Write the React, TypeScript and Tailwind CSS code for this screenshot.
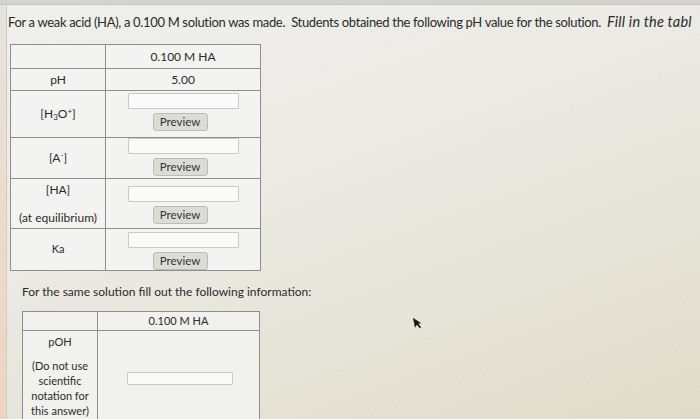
import React from 'react';

const font = { fontFamily: 'Lato, "Open Sans", sans-serif' };

function AnswerBox({ w = 'w-[111px]', h = 'h-[16px]' }: { w?: string; h?: string }) {
  return <div className={`${w} ${h} bg-[#fafaf8] border border-[#c9c9c5] rounded-[1px]`} />;
}

function PreviewButton() {
  return (
    <div className="mr-[6px] w-[55px] h-[18px] bg-[#dcdcd7] border border-[#bdbdb8] rounded-[3px] flex items-center justify-center text-[11.5px] text-[#333]">
      Preview
    </div>
  );
}

function InputCell({ top }: { top: string }) {
  return (
    <div className={`flex flex-col items-center gap-[4px] ${top}`}>
      <AnswerBox />
      <PreviewButton />
    </div>
  );
}

const cell = 'p-0 border border-[#8e8e8c]';

export default function App() {
  return (
    <div
      className="relative w-[700px] h-[419px] overflow-hidden text-[#2b2b2b] bg-[linear-gradient(160deg,#efefec_0%,#ecebe6_35%,#e6e4d8_70%,#dfdbc9_100%)]"
      style={font}
    >
      <div className="h-[5px] bg-[#d3d3d0] border-b border-[#c4c4c0]" />

      <div className="flex">
        {/* left edge of the monitor bezel */}
        <div className="w-[7px] shrink-0 h-[414px] border-r border-[#cfcac2] bg-[linear-gradient(180deg,#e6e4e0_0%,#ecdccd_45%,#f0d4c0_100%)]" />

        <div className="flex-1 min-w-0">
          <p className="mt-[9px] ml-[1px] text-[13px] leading-[16px] whitespace-nowrap tracking-[-0.33px]">
            For a weak acid (HA), a 0.100 M solution was made.&nbsp; Students obtained the following pH value for the solution.&nbsp;{' '}
            <i className="text-[14.5px] tracking-[0.2px]">Fill in the tabl</i>
          </p>

          <table className="mt-[14px] ml-[3px] border-collapse text-[12px] bg-[#f3f3f1]">
            <tbody>
              <tr className="h-[24px]">
                <td className={`w-[95px] ${cell}`} />
                <td className={`w-[155px] ${cell} text-center`}>0.100 M HA</td>
              </tr>
              <tr className="h-[22px]">
                <td className={`${cell} text-center`}>pH</td>
                <td className={`${cell} text-center`}>5.00</td>
              </tr>
              <tr className="h-[47px]">
                <td className={`${cell} text-center`}>
                  [H<sub className="text-[8px]">3</sub>O<sup className="text-[8px]">+</sup>]
                </td>
                <td className={`${cell} align-top`}>
                  <InputCell top="pt-[2px]" />
                </td>
              </tr>
              <tr className="h-[41px]">
                <td className={`${cell} text-center`}>
                  [A<sup className="text-[8px]">-</sup>]
                </td>
                <td className={`${cell} align-top`}>
                  <InputCell top="pt-[0px]" />
                </td>
              </tr>
              <tr className="h-[50px]">
                <td className={`${cell} text-center leading-[14px]`}>
                  [HA]
                  <br />
                  <br />
                  (at equilibrium)
                </td>
                <td className={`${cell} align-top`}>
                  <InputCell top="pt-[7px]" />
                </td>
              </tr>
              <tr className="h-[42px]">
                <td className={`${cell} text-center text-[11px]`}>Ka</td>
                <td className={`${cell} align-top`}>
                  <InputCell top="pt-[3px]" />
                </td>
              </tr>
            </tbody>
          </table>

          <p className="mt-[14px] ml-[15px] text-[12px] leading-[14px] whitespace-nowrap">
            For the same solution fill out the following information:
          </p>

          <table className="mt-[12px] ml-[15px] border-collapse text-[11px] bg-[#f1f1ee]">
            <tbody>
              <tr className="h-[19px]">
                <td className={`w-[75px] ${cell}`} />
                <td className={`w-[162px] ${cell} text-center`}>0.100 M HA</td>
              </tr>
              <tr className="h-[95px]">
                <td className={`${cell} text-center align-top leading-[15px] pt-[3px]`}>
                  <div>pOH</div>
                  <div className="mt-[9px]">
                    (Do not use
                    <br />
                    scientific
                    <br />
                    notation for
                    <br />
                    this answer)
                  </div>
                </td>
                <td className={`${cell} align-top`}>
                  <div className="mt-[41px] ml-[29px]">
                    <AnswerBox w="w-[106px]" h="h-[13px]" />
                  </div>
                </td>
              </tr>
            </tbody>
          </table>
        </div>
      </div>

      {/* mouse pointer */}
      <svg className="absolute left-[413px] top-[316px] rotate-[-12deg]" width="9" height="13" viewBox="0 0 9 13">
        <path d="M1 1 L1 11 L3.5 8.5 L5.5 12.5 L7 11.8 L5 8 L8 8 Z" fill="#1a1a1a" />
      </svg>
    </div>
  );
}
